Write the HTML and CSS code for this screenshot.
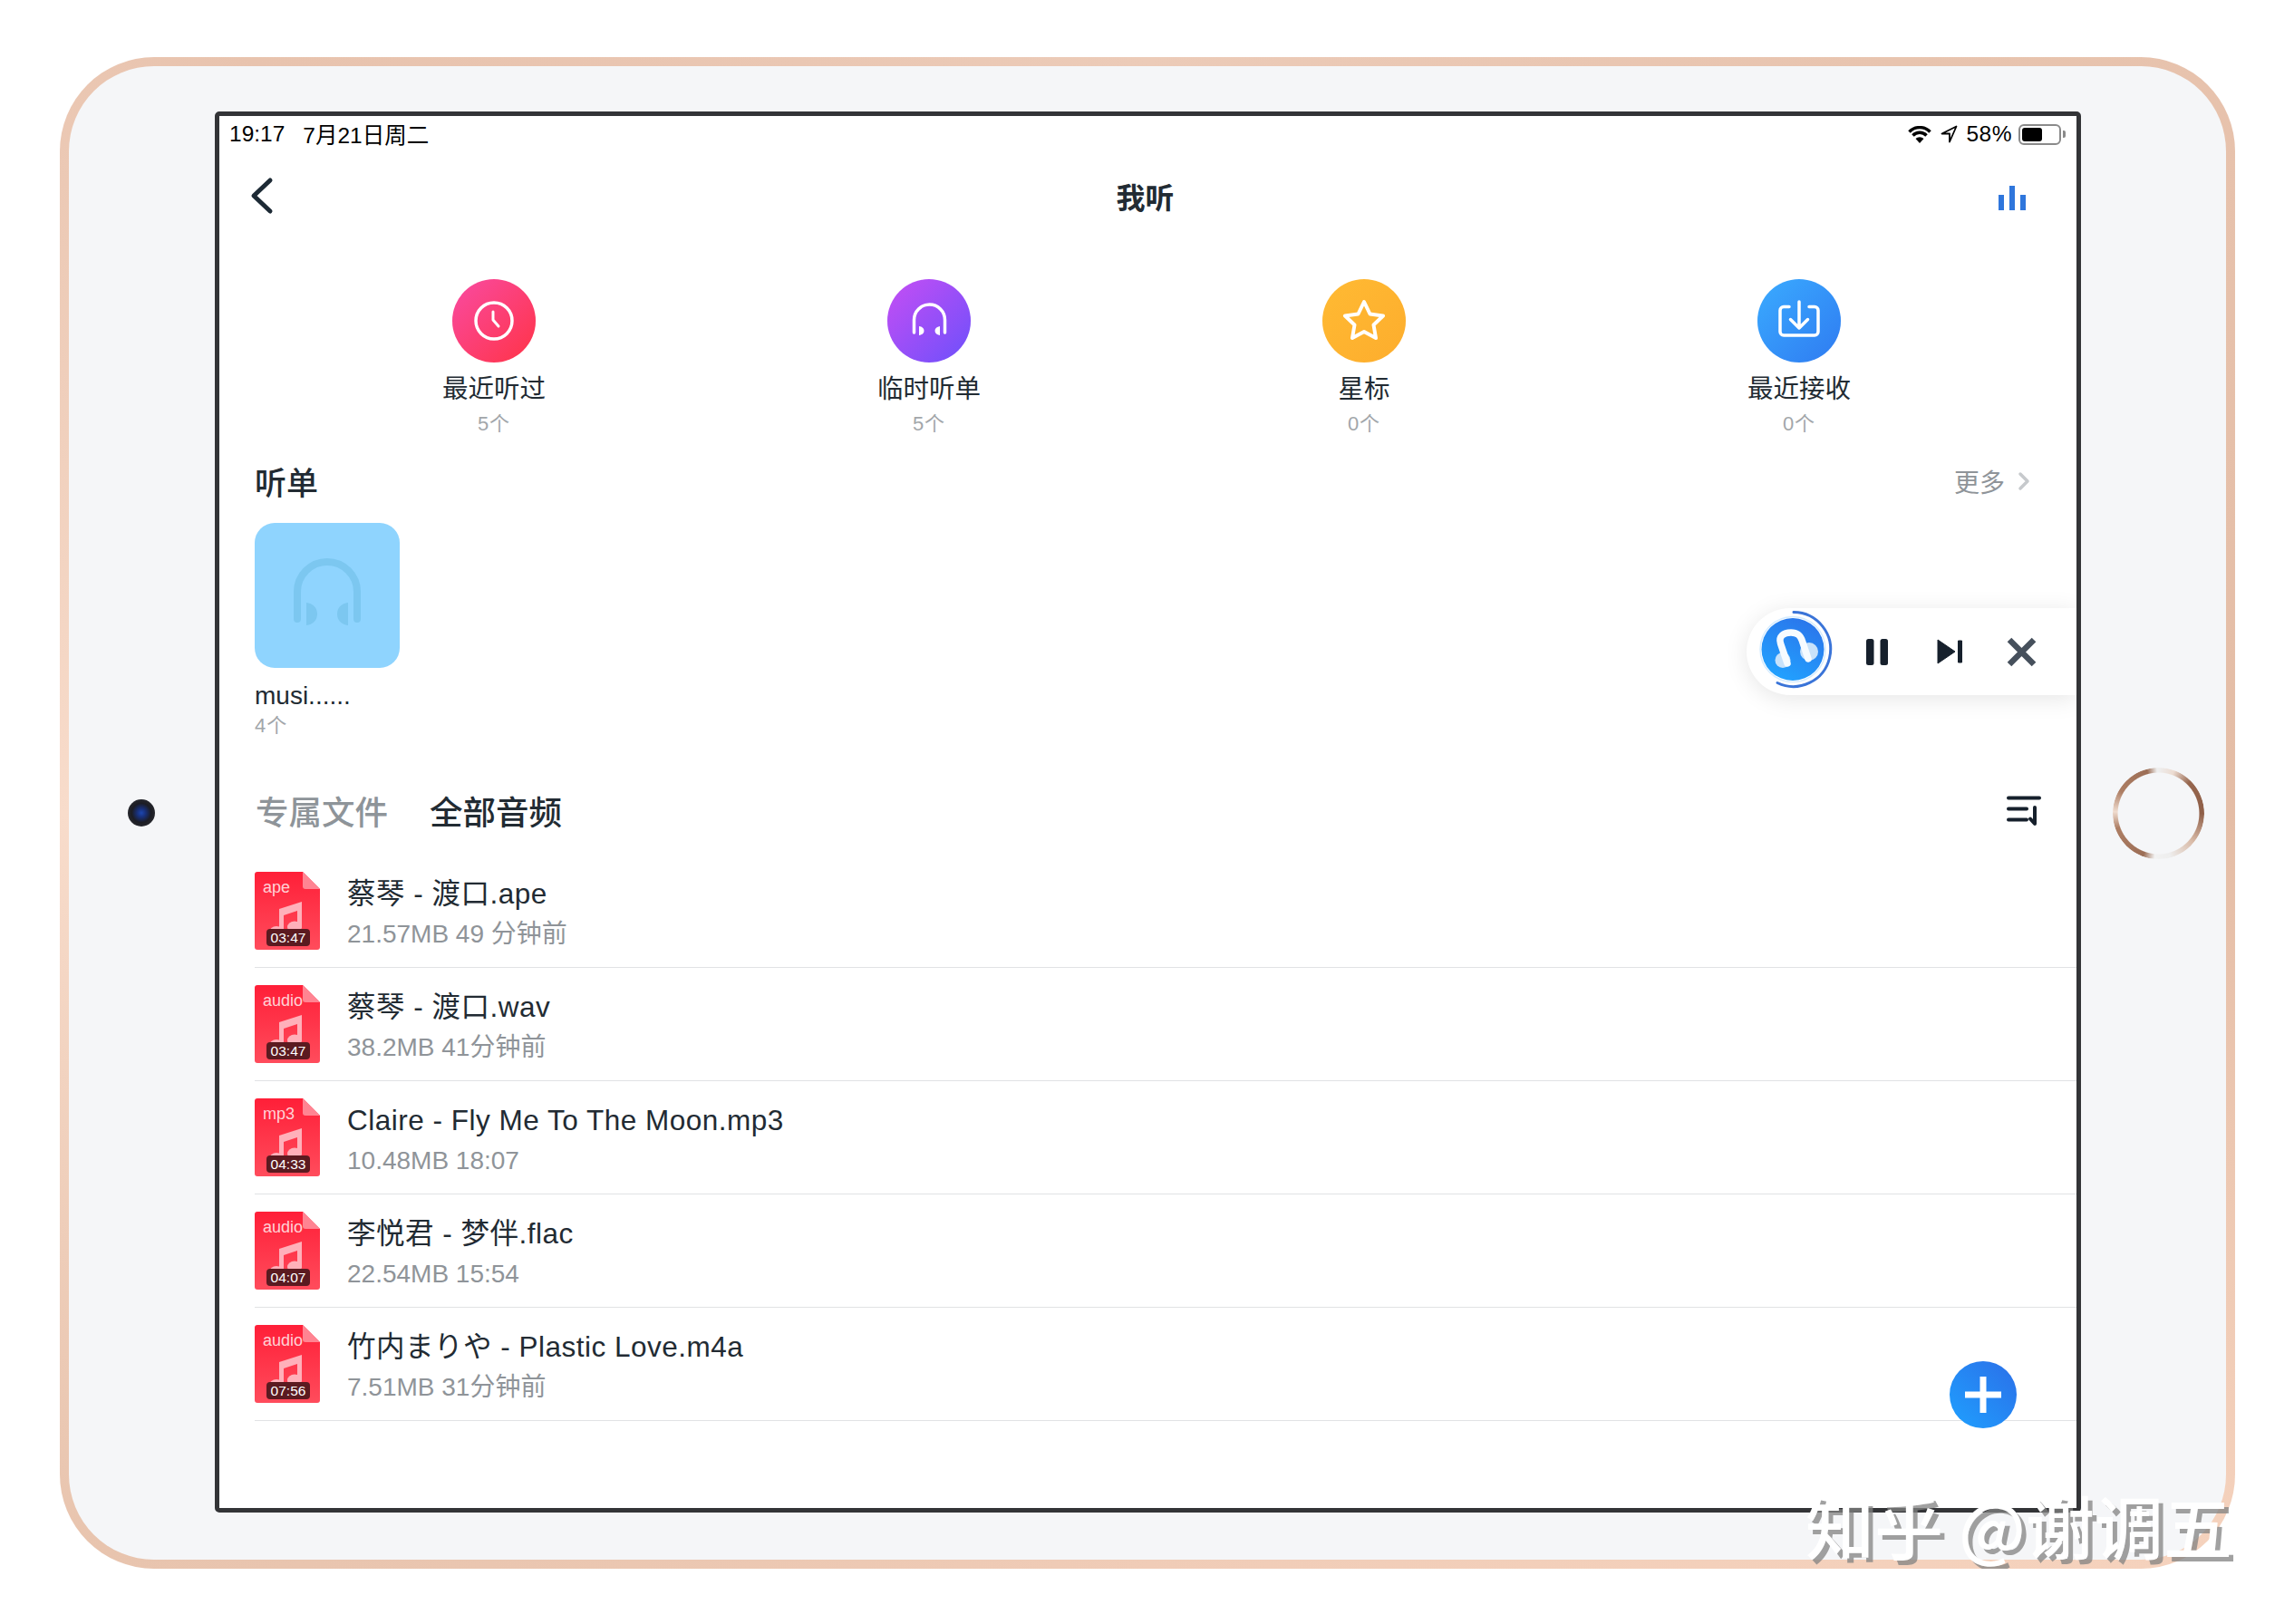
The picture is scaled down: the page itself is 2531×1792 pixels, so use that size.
FILE: index.html
```html
<!DOCTYPE html>
<html>
<head>
    <meta charset="utf-8">
    <link rel="stylesheet" href="styles.css">
</head>
<body>
    <svg class="defs" width="0" height="0">
        <defs>
            <linearGradient id="file-red" x1="0" y1="0" x2="0" y2="1">
                <stop offset="0" stop-color="#ff1f38"/>
                <stop offset="1" stop-color="#ff4c5c"/>
            </linearGradient>
            <linearGradient id="logo-blue" x1="0.8" y1="0" x2="0.3" y2="1">
                <stop offset="0" stop-color="#2b74ea"/>
                <stop offset="1" stop-color="#21a2ff"/>
            </linearGradient>
            <symbol id="file-art" viewBox="0 0 72 86">
                <path fill="url(#file-red)" d="M3 0H53L72 19V83a3 3 0 0 1-3 3H3a3 3 0 0 1-3-3V3a3 3 0 0 1 3-3z"/>
                <path fill="#ff8492" d="M53 0L72 19H56a3 3 0 0 1-3-3z"/>
                <path fill="#ffb0ba" d="M27 41L52 33V62H47V43L32 48V68H27z"/>
                <ellipse cx="24" cy="67" rx="8" ry="7" fill="#ffb0ba"/>
                <ellipse cx="44" cy="61" rx="8" ry="6.500" fill="#ffb0ba"/>
            </symbol>
            <symbol id="cans" viewBox="0 0 92 92">
                <path fill="none" stroke="currentColor" stroke-width="3.500" stroke-linecap="round" d="M29.500 59V45a17 17 0 0 1 34 0V59"/>
                <path fill="currentColor" d="M35 52c3.500 .5 5.500 2.500 5.500 5s-2 4.500-5.500 5zM58 52c-3.500 .5-5.500 2.500-5.500 5s2 4.500 5.500 5z"/>
            </symbol>
        </defs>
    </svg>

    <div class="device">
        <div class="camera"></div>

        <div class="screen">
            <div class="status-bar">
                <span class="status-time">19:17</span>
                <span class="status-date">7月21日周二</span>
                <div class="status-right">
                    <svg width="26" height="19" viewBox="0 0 26 19">
                        <path fill="none" stroke="#000" stroke-width="3.500" d="M1.500 6.500a16 16 0 0 1 23 0M5.500 10.500a10.500 10.500 0 0 1 15 0"/>
                        <path fill="#000" d="M13 19l-4.500-5a6.500 6.500 0 0 1 9 0z"/>
                    </svg>
                    <svg class="status-arrow" width="19" height="20" viewBox="0 0 19 20">
                        <path fill="none" stroke="#000" stroke-width="1.800" stroke-linejoin="round" d="M17.500 1.500L1.500 9.500H10V18.500z"/>
                    </svg>
                    <span class="status-battery-text">58%</span>
                    <div class="battery"><div class="battery-fill"></div></div>
                    <div class="battery-nub"></div>
                </div>
            </div>

            <div class="nav">
                <svg class="nav-back" width="26" height="42" viewBox="0 0 26 42">
                    <path fill="none" stroke="#1d2a35" stroke-width="5" stroke-linecap="round" stroke-linejoin="round" d="M22 4L4 21L22 38"/>
                </svg>
                <div class="nav-title">我听</div>
                <svg class="nav-chart" width="30" height="27" viewBox="0 0 30 27">
                    <path fill="#2f76dc" d="M0 10H6V27H0zM12 0H18V27H12zM24 10H30V27H24z"/>
                </svg>
            </div>

            <div class="shortcuts">
                <div class="shortcut">
                    <svg class="shortcut-circle circle-pink" viewBox="0 0 92 92">
                        <circle cx="46" cy="46" r="20" fill="none" stroke="#fff" stroke-width="3.500"/>
                        <path fill="none" stroke="#fff" stroke-width="3" stroke-linecap="round" stroke-linejoin="round" d="M45 36V45L51 52"/>
                    </svg>
                    <div class="shortcut-label">最近听过</div>
                    <div class="shortcut-count">5个</div>
                </div>
                <div class="shortcut">
                    <svg class="shortcut-circle circle-purple" viewBox="0 0 92 92"><use href="#cans"/></svg>
                    <div class="shortcut-label">临时听单</div>
                    <div class="shortcut-count">5个</div>
                </div>
                <div class="shortcut">
                    <svg class="shortcut-circle circle-orange" viewBox="0 0 92 92">
                        <path fill="none" stroke="#fff" stroke-width="4" stroke-linejoin="round" d="M46 25L52.500 38.500L67 40.500L56.500 50.500L59 65L46 58L33 65L35.500 50.500L25 40.500L39.500 38.500z"/>
                    </svg>
                    <div class="shortcut-label">星标</div>
                    <div class="shortcut-count">0个</div>
                </div>
                <div class="shortcut">
                    <svg class="shortcut-circle circle-blue" viewBox="0 0 92 92">
                        <path fill="none" stroke="#fff" stroke-width="3.500" stroke-linecap="round" d="M35 30.500H29a4 4 0 0 0-4 4V58a4 4 0 0 0 4 4H63a4 4 0 0 0 4-4V34.500a4 4 0 0 0-4-4H57"/>
                        <path fill="none" stroke="#fff" stroke-width="3.500" stroke-linecap="round" stroke-linejoin="round" d="M46 25V54M36.500 44.500L46 54L55.500 44.500"/>
                    </svg>
                    <div class="shortcut-label">最近接收</div>
                    <div class="shortcut-count">0个</div>
                </div>
            </div>

            <div class="section-head">
                <div class="section-title">听单</div>
                <div class="section-more">
                    更多
                    <svg width="14" height="22" viewBox="0 0 14 22">
                        <path fill="none" stroke="#c6c9cc" stroke-width="3.500" stroke-linecap="round" stroke-linejoin="round" d="M3 3L11 11L3 19"/>
                    </svg>
                </div>
            </div>

            <div class="playlist">
                <div class="playlist-cover">
                    <svg width="160" height="160" viewBox="0 0 160 160">
                        <path fill="none" stroke="#7cc7f0" stroke-width="8" stroke-linecap="round" d="M47 106V76a33 33 0 0 1 66 0V106"/>
                        <path fill="#7cc7f0" d="M57 88c8 1 12 6 12 12.500S65 112 57 113zM103 88c-8 1-12 6-12 12.500S95 112 103 113z"/>
                    </svg>
                </div>
                <div class="playlist-name">musi......</div>
                <div class="playlist-count">4个</div>
            </div>

            <div class="tabs">
                <div class="tab">专属文件</div>
                <div class="tab tab-active">全部音频</div>
                <svg class="tabs-sort" width="38" height="33" viewBox="0 0 38 33">
                    <path fill="none" stroke="#16202c" stroke-width="4" stroke-linecap="round" stroke-linejoin="round" d="M2 2.500H36M2 14.500H22M2 26.500H22M31 13V31L26 25.500"/>
                </svg>
            </div>

            <div class="file-list">
                <div class="file-row">
                    <div class="file-icon">
                        <svg width="72" height="86"><use href="#file-art"/></svg>
                        <span class="file-type">ape</span>
                        <span class="file-time">03:47</span>
                    </div>
                    <div class="file-text">
                        <div class="file-name">蔡琴 - 渡口.ape</div>
                        <div class="file-meta">21.57MB 49 分钟前</div>
                    </div>
                </div>
                <div class="file-row">
                    <div class="file-icon">
                        <svg width="72" height="86"><use href="#file-art"/></svg>
                        <span class="file-type">audio</span>
                        <span class="file-time">03:47</span>
                    </div>
                    <div class="file-text">
                        <div class="file-name">蔡琴 - 渡口.wav</div>
                        <div class="file-meta">38.2MB 41分钟前</div>
                    </div>
                </div>
                <div class="file-row">
                    <div class="file-icon">
                        <svg width="72" height="86"><use href="#file-art"/></svg>
                        <span class="file-type">mp3</span>
                        <span class="file-time">04:33</span>
                    </div>
                    <div class="file-text">
                        <div class="file-name">Claire - Fly Me To The Moon.mp3</div>
                        <div class="file-meta">10.48MB 18:07</div>
                    </div>
                </div>
                <div class="file-row">
                    <div class="file-icon">
                        <svg width="72" height="86"><use href="#file-art"/></svg>
                        <span class="file-type">audio</span>
                        <span class="file-time">04:07</span>
                    </div>
                    <div class="file-text">
                        <div class="file-name">李悦君 - 梦伴.flac</div>
                        <div class="file-meta">22.54MB 15:54</div>
                    </div>
                </div>
                <div class="file-row">
                    <div class="file-icon">
                        <svg width="72" height="86"><use href="#file-art"/></svg>
                        <span class="file-type">audio</span>
                        <span class="file-time">07:56</span>
                    </div>
                    <div class="file-text">
                        <div class="file-name">竹内まりや - Plastic Love.m4a</div>
                        <div class="file-meta">7.51MB 31分钟前</div>
                    </div>
                </div>
            </div>

            <div class="mini-player">
                <svg class="mini-logo" width="100" height="100" viewBox="0 0 100 100">
                    <circle cx="48" cy="48.500" r="34.500" fill="url(#logo-blue)"/>
                    <circle cx="48" cy="48.500" r="36" fill="none" stroke="#d5ecff" stroke-width="1.500"/>
                    <path fill="none" stroke="#3a74d8" stroke-width="3" stroke-linecap="round" d="M49 7.500A41 41 0 1 1 31 85.500"/>
                    <circle cx="37" cy="60.500" r="8.500" fill="#c8e2fa"/>
                    <circle cx="66" cy="51" r="10" fill="#c8e2fa"/>
                    <path fill="none" stroke="#f6fbff" stroke-width="7.500" stroke-linecap="round" d="M42 64L34.500 42C32 34 38 30 46 30C53 30 56.500 33 58.500 39.500L65 59"/>
                </svg>
                <svg class="mini-pause" width="24" height="29" viewBox="0 0 24 29">
                    <rect width="8.500" height="29" rx="2.500" fill="#16202c"/>
                    <rect x="15.500" width="8.500" height="29" rx="2.500" fill="#16202c"/>
                </svg>
                <svg class="mini-next" width="28" height="28" viewBox="0 0 28 28">
                    <path fill="#16202c" stroke="#16202c" stroke-linejoin="round" d="M1 1L20 14L1 27zM23.500 2H27.500V26H23.500z"/>
                </svg>
                <svg class="mini-close" width="33" height="33" viewBox="0 0 33 33">
                    <path fill="none" stroke="#46505c" stroke-width="6.500" d="M3 3L30 30M30 3L3 30"/>
                </svg>
            </div>

            <div class="add-button">
                <svg width="40" height="40" viewBox="0 0 40 40">
                    <path fill="#fff" d="M16.500 0H23.500V16.500H40V23.500H23.500V40H16.500V23.500H0V16.500H16.500z"/>
                </svg>
            </div>
        </div>

        <div class="home-button"></div>
        <div class="watermark">知乎 @谢调五</div>
    </div>
</body>
</html>
```

FILE: styles.css
```css
* {
    box-sizing: border-box;
}
body {
    margin: 0;
    background: #fff;
    font-family: "Liberation Sans", "Noto Sans CJK SC", sans-serif;
    color: #222b33;
}
.defs {
    display: block;
}
.device {
    position: relative;
    width: 2400px;
    height: 1668px;
    margin: 63px 0 0 66px;
    border: 10px solid transparent;
    border-radius: 104px;
    background:
        linear-gradient(#f5f6f8, #f5f6f8) padding-box,
        conic-gradient(#eccbb8 0deg, #e4bda6 90deg, #f5d2bd 125deg, #f0ccb7 180deg, #e8c4ae 235deg, #f8dccb 270deg, #e8c3ae 310deg, #eccbb8 360deg) border-box;
    display: grid;
    grid-template-columns: 161px 2059px 1fr;
    align-items: center;
}
.camera {
    width: 30px;
    height: 30px;
    margin-left: 65px;
    border-radius: 50%;
    background: radial-gradient(circle, #1d47b0 0, #18307a 22%, #1c1d24 50%, #34353a 100%);
}
.screen {
    align-self: start;
    position: relative;
    height: 1546px;
    margin-top: 50px;
    border: 5px solid #333437;
    border-radius: 5px;
    background: #fff;
    overflow: hidden;
}

/* status bar */
.status-bar {
    height: 40px;
    padding: 0 12px 0 11px;
    display: flex;
    align-items: center;
    font-size: 24.500px;
    color: #000;
}
.status-date {
    margin-left: 20px;
    margin-top: -2px;
}
.status-right {
    margin-left: auto;
    display: flex;
    align-items: center;
}
.status-arrow {
    margin-left: 10px;
}
.status-battery-text {
    margin-left: 9px;
    letter-spacing: 0.5px;
}
.battery {
    width: 47px;
    height: 23px;
    margin-left: 7px;
    padding: 2px;
    border: 2px solid #8a8a8a;
    border-radius: 6px;
}
.battery-fill {
    width: 22px;
    height: 15px;
    background: #000;
    border-radius: 3px;
}
.battery-nub {
    width: 3px;
    height: 8px;
    margin-left: 2px;
    background: #8a8a8a;
    border-radius: 0 2px 2px 0;
}

/* nav */
.nav {
    height: 96px;
    padding: 0 40px 0 34px;
    display: grid;
    grid-template-columns: 1fr auto 1fr;
    align-items: center;
}
.nav-title {
    font-size: 32px;
    font-weight: 700;
}
.nav-chart {
    justify-self: end;
    margin-right: 16px;
    margin-top: 5px;
}

/* shortcuts */
.shortcuts {
    margin-top: 44px;
    padding-left: 63px;
    display: grid;
    grid-template-columns: repeat(4, 480px);
}
.shortcut {
    display: flex;
    flex-direction: column;
    align-items: center;
}
.shortcut-circle {
    width: 92px;
    height: 92px;
    border-radius: 50%;
    color: #fff;
}
.circle-pink {
    background: linear-gradient(135deg, #f94ba2, #ff3346);
}
.circle-purple {
    background: linear-gradient(135deg, #c64ef4, #6d50fb);
}
.circle-orange {
    background: linear-gradient(135deg, #ffba33, #fdad2d);
}
.circle-blue {
    background: linear-gradient(135deg, #3aabff, #2f7bf1);
}
.shortcut-label {
    margin-top: 11px;
    font-size: 28.500px;
    line-height: 36px;
}
.shortcut-count {
    margin-top: 9px;
    font-size: 22px;
    line-height: 24px;
    letter-spacing: 1px;
    color: #a2a6aa;
}

/* playlist section */
.section-head {
    margin-top: 26px;
    padding: 0 51px 0 39px;
    height: 48px;
    display: flex;
    align-items: center;
    justify-content: space-between;
}
.section-title {
    font-size: 35px;
    font-weight: 500;
}
.section-more {
    padding-top: 2px;
    display: flex;
    align-items: center;
    gap: 14px;
    font-size: 28px;
    color: #8f9499;
}
.playlist {
    margin-top: 23px;
    padding-left: 39px;
}
.playlist-cover {
    width: 160px;
    height: 160px;
    border-radius: 22px;
    background: #8fd4fe;
}
.playlist-cover svg {
    display: block;
}
.playlist-name {
    margin-top: 13px;
    font-size: 28px;
    line-height: 36px;
}
.playlist-count {
    margin-top: 2px;
    font-size: 22px;
    line-height: 26px;
    letter-spacing: 1px;
    color: #a2a6aa;
}

/* tabs */
.tabs {
    margin-top: 56px;
    padding: 0 39px 0 40px;
    height: 48px;
    display: flex;
    align-items: center;
    gap: 46px;
    font-size: 36.500px;
    font-weight: 500;
    color: #8e9499;
}
.tab-active {
    color: #222b33;
}
.tabs-sort {
    margin-left: auto;
}

/* file rows */
.file-list {
    margin-top: 25px;
    padding-left: 39px;
}
.file-row {
    height: 125px;
    border-bottom: 1px solid #e1e2e4;
    display: flex;
    align-items: center;
    gap: 30px;
}
.file-icon {
    position: relative;
    width: 72px;
    height: 86px;
}
.file-icon svg {
    display: block;
}
.file-type {
    position: absolute;
    left: 9px;
    top: 6px;
    font-size: 18px;
    line-height: 22px;
    color: rgba(255, 255, 255, 0.8);
}
.file-time {
    position: absolute;
    left: 13px;
    top: 63px;
    width: 48px;
    height: 19px;
    border-radius: 4px;
    background: #5b1a20;
    color: #fff;
    font-size: 15.500px;
    line-height: 19px;
    text-align: center;
}
.file-text {
    padding-top: 6px;
}
.file-name {
    font-size: 31.500px;
    line-height: 40px;
    letter-spacing: 0.5px;
}
.file-meta {
    margin-top: 6px;
    font-size: 28px;
    line-height: 38px;
    color: #8f9499;
}

/* floating things */
.mini-player {
    position: absolute;
    right: 0;
    top: 543px;
    width: 364px;
    height: 96px;
    border-radius: 48px 0 0 48px;
    background: #fff;
    box-shadow: 0 4px 26px rgba(0, 0, 0, 0.1);
    display: flex;
    align-items: center;
    padding-left: 3px;
}
.mini-logo {
    flex: none;
    margin-top: -2px;
}
.mini-pause {
    margin-left: 29px;
}
.mini-next {
    margin-left: 54px;
}
.mini-close {
    margin-left: 49px;
}
.add-button {
    position: absolute;
    right: 66px;
    bottom: 88px;
    width: 74px;
    height: 74px;
    border-radius: 50%;
    background: linear-gradient(45deg, #1fa0ff, #2b6fe8);
    display: flex;
    align-items: center;
    justify-content: center;
}
.home-button {
    justify-self: center;
    width: 101px;
    height: 101px;
    margin-left: 10px;
    border-radius: 50%;
    background: conic-gradient(#eeeeee 0deg, #ecdcd2 20deg, #96664e 45deg, #8f5f48 90deg, #d9bba8 130deg, #eeeeee 165deg, #f2f2f2 185deg, #9c6e56 200deg, #ad7e64 250deg, #f0dccf 272deg, #ad7e64 300deg, #9c6e56 345deg, #eeeeee 358deg);
    -webkit-mask: radial-gradient(closest-side, transparent 88%, #000 90%);
    mask: radial-gradient(closest-side, transparent 88%, #000 90%);
}
.watermark {
    position: absolute;
    left: 1916px;
    top: 1571px;
    font-family: "Noto Sans CJK SC", sans-serif;
    font-size: 76px;
    font-weight: 500;
    line-height: 76px;
    white-space: nowrap;
    color: #fff;
    text-shadow: 5px 5px 0 rgba(130, 130, 130, 0.75);
}
```
